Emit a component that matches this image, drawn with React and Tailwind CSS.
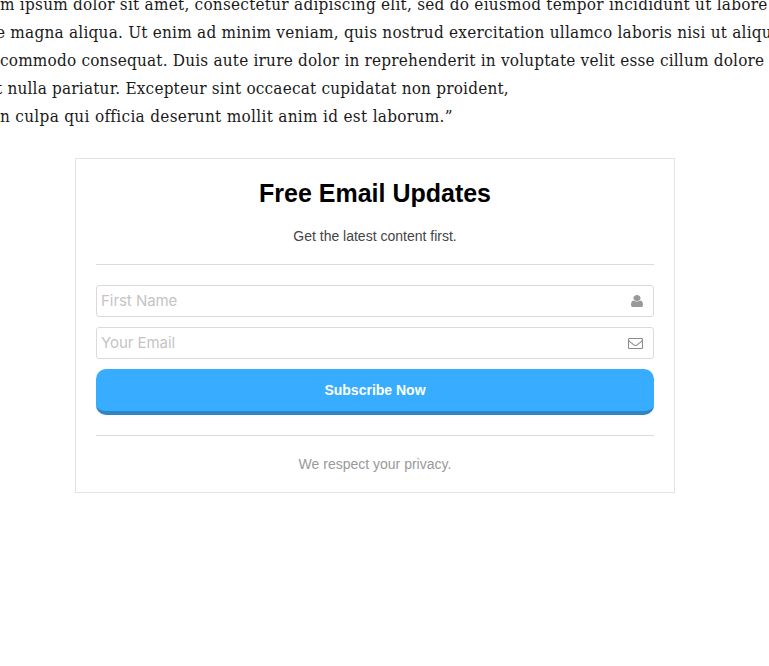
const lines = [
  { text: 'm ipsum dolor sit amet, consectetur adipiscing elit, sed do eiusmod tempor incididunt ut labore', cls: 'tracking-[0.25px]' },
  { text: 'e magna aliqua. Ut enim ad minim veniam, quis nostrud exercitation ullamco laboris nisi ut aliqu', cls: '-ml-[4px] tracking-[0.23px]' },
  { text: 'commodo consequat. Duis aute irure dolor in reprehenderit in voluptate velit esse cillum dolore', cls: 'tracking-[0.2px]' },
  { text: 't nulla pariatur. Excepteur sint occaecat cupidatat non proident,', cls: '-ml-[4px] tracking-[0.2px]' },
  { text: 'n culpa qui officia deserunt mollit anim id est laborum.”', cls: 'tracking-[0.31px]' },
];

function UserIcon() {
  return (
    <svg viewBox="256 128 1280 1536" className="h-3 w-3" fill="#999" preserveAspectRatio="none">
      <path d="M1536 1399q0 109-62.5 187t-150.5 78h-854q-88 0-150.5-78t-62.5-187q0-85 8.5-160.5t31.5-152 58.5-131 94-89 134.5-34.5q131 128 313 128t313-128q76 0 134.5 34.5t94 89 58.5 131 31.5 152 8.5 160.5zM1280 512q0 159-112.5 271.5t-271.5 112.5-271.5-112.5-112.5-271.5 112.5-271.5 271.5-112.5 271.5 112.5 112.5 271.5z" />
    </svg>
  );
}

function MailIcon() {
  return (
    <svg viewBox="0 256 1792 1408" className="mt-px h-[11px] w-[15px]" fill="#8c8c8c" preserveAspectRatio="none">
      <path d="M1664 1504v-768q-32 36-69 66-268 206-426 338-51 43-83 67t-86.5 48.5-102.5 24.5h-2q-48 0-102.5-24.5t-86.5-48.5-83-67q-158-132-426-338-37-30-69-66v768q0 13 9.5 22.5t22.5 9.5h1472q13 0 22.5-9.5t9.5-22.5zM1664 453v-24.5t-.5-13-3-12.5-5.5-9-9-7.5-14-2.5h-1472q-13 0-22.5 9.5t-9.5 22.5q0 168 147 284 193 152 401 317 6 5 35 29.5t46 37.5 44.5 31.5 50.5 27.5 43 9h2q20 0 43-9t50.5-27.5 44.5-31.5 46-37.5 35-29.5q208-165 401-317 54-43 100.5-115.5t46.5-131.5zM1792 416v1088q0 66-47 113t-113 47h-1472q-66 0-113-47t-47-113v-1088q0-66 47-113t113-47h1472q66 0 113 47t47 113z" />
    </svg>
  );
}

function Field({ placeholder, icon }) {
  return (
    <label className="flex h-8 items-center rounded-[3px] border border-[#dadada] pr-2.5 pl-1">
      <input
        placeholder={placeholder}
        className="h-full min-w-0 flex-1 bg-transparent pb-px font-['Inter',sans-serif] text-[15px] tracking-[-0.05px] outline-none placeholder:text-[#c4c4c4]"
      />
      {icon}
    </label>
  );
}

export default function App() {
  return (
    <div className="h-[666px] overflow-hidden bg-white">
      <div className="-mt-[10px] font-['DejaVu_Serif_Condensed','DejaVu_Serif',serif] text-[17px] leading-7 whitespace-nowrap text-[#1a1a1a]">
        {lines.map((l) => (
          <p key={l.text} className={l.cls}>{l.text}</p>
        ))}
      </div>
      <form className="mt-7 ml-[75px] flex h-[335px] w-[600px] flex-col border border-[#e3e3e3] px-5 font-['Liberation_Sans',Arial,sans-serif]">
        <h2 className="mt-[18px] text-center text-[25px] leading-8 font-bold text-black">Free Email Updates</h2>
        <p className="mt-[17px] text-center text-[14px] leading-5 text-[#444]">Get the latest content first.</p>
        <hr className="mt-[18px] mb-5 border-[#dadada]" />
        <div className="flex flex-col gap-2.5">
          <Field placeholder="First Name" icon={<UserIcon />} />
          <Field placeholder="Your Email" icon={<MailIcon />} />
          <button type="button" className="h-[46px] rounded-[10px] border-b-4 border-[#2f86c4] bg-[#38adff] text-[14px] font-bold text-white">
            Subscribe Now
          </button>
        </div>
        <hr className="mt-5 border-[#dadada]" />
        <p className="mt-[18px] text-center text-[14px] leading-5 text-[#999]">We respect your privacy.</p>
      </form>
    </div>
  );
}
